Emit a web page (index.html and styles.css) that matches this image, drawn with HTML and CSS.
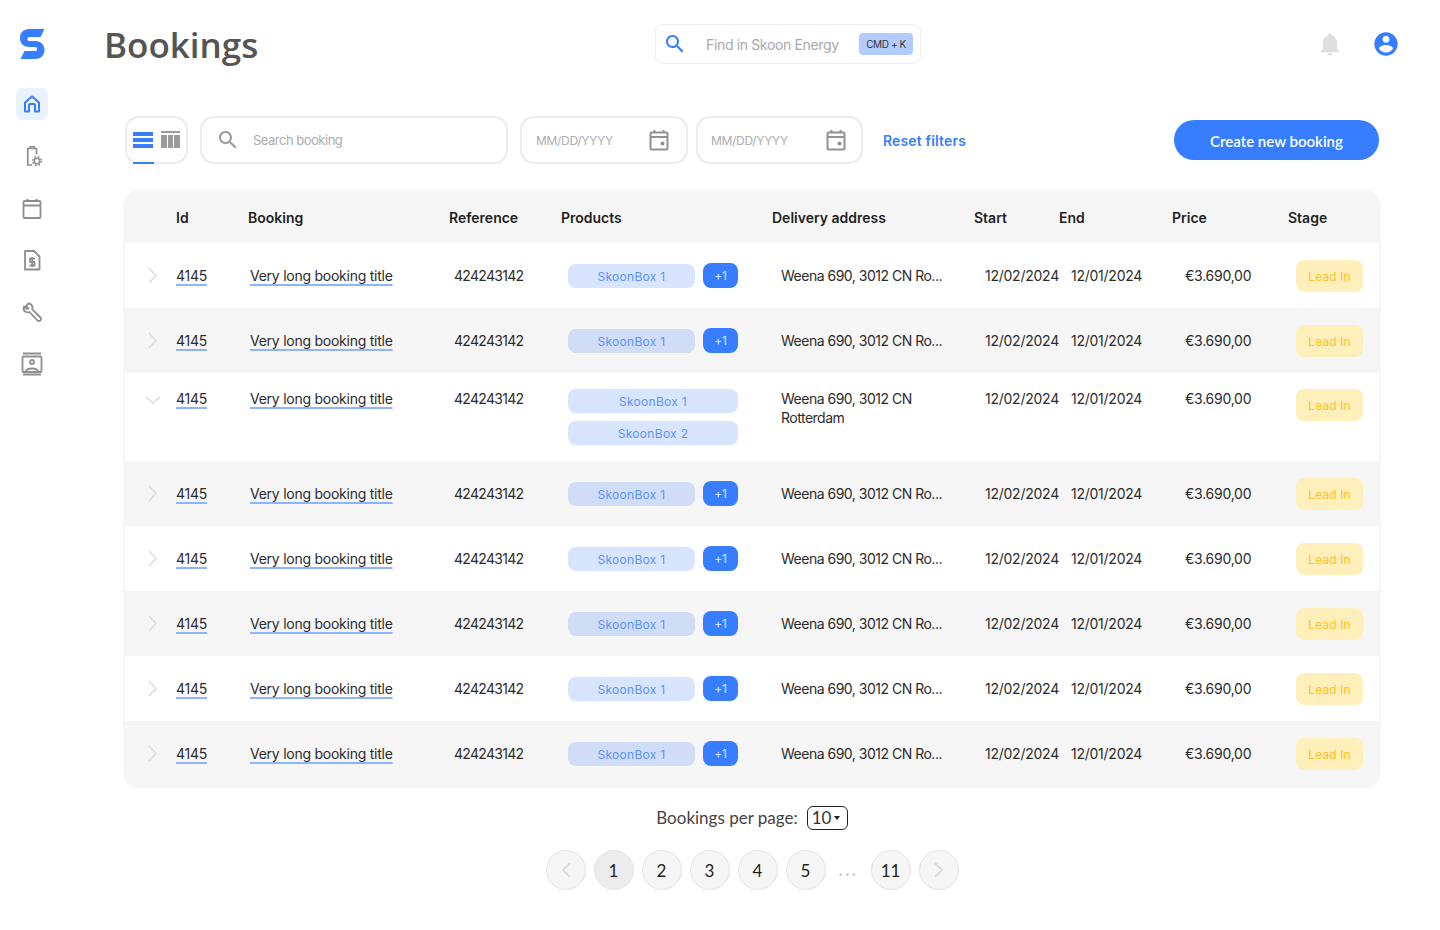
FILE: index.html
```html
<!DOCTYPE html>
<html lang="en">
<head>
<meta charset="utf-8">
<title>Bookings</title>
<link rel="stylesheet" href="styles.css">
</head>
<body>
<div class="app">
  <aside class="sidebar">
    <svg class="logo" width="25" height="30" viewBox="0 0 25 30"><path fill="#377dff" d="M24.500 0H9C3.500 0 0 3.500 0 9C0 14.500 3.500 18 9 18H15.500C16.500 18 17 18.700 17 20C17 21.300 16.500 22 15.500 22H4.500L.5 30H15.500C21 30 24.500 26 24.500 21C24.500 16 21 12 15.500 12H9C8 12 7.500 11.200 7.500 10C7.500 8.800 8 8 9 8H20.500Z"/></svg>
    <nav class="nav">
      <a class="nav-item active"><svg width="24" height="24" viewBox="0 0 24 24" fill="none" stroke="#377dff" stroke-width="2" stroke-linejoin="round"><path d="M5 10.500L12 4.500L19 10.500V19.500H15V13.500A1.500 1.500 0 0 0 13.500 12H10.500A1.500 1.500 0 0 0 9 13.500V19.500H5Z"/></svg></a>
      <a class="nav-item"><svg width="24" height="24" viewBox="0 0 24 24" fill="none" stroke="#8f8f8f" stroke-width="1.700"><path d="M16.500 10.500V4.500H7.800V21H12"/><path d="M10 4.500V2.700H14.300V4.500" stroke-width="1.500"/><circle cx="17" cy="17" r="2.700" stroke-width="1.500"/><circle cx="17" cy="17" r="4.300" stroke-width="1.500" stroke-dasharray="1.800 1.600"/></svg></a>
      <a class="nav-item"><svg width="24" height="24" viewBox="0 0 24 24" fill="none" stroke="#8f8f8f" stroke-width="1.800"><rect x="3.500" y="5" width="17" height="17" rx="1"/><path d="M3.500 9.500H20.500M7.500 3V5M16.500 3V5"/></svg></a>
      <a class="nav-item"><svg width="24" height="24" viewBox="0 0 24 24" fill="none" stroke="#8f8f8f" stroke-width="1.800" stroke-linejoin="round"><path d="M5 3H14L19.500 8.500V21.500H5Z"/><path d="M15 10.500H10V14H14.500V17.500H9.500M12.200 9V19"/></svg></a>
      <a class="nav-item"><svg width="24" height="24" viewBox="0 0 24 24" fill="none" stroke="#8f8f8f" stroke-width="1.800" stroke-linejoin="round"><path d="M8.500 3.500L6 6L8.500 8.500L6 8.500L4 6.500C3 9 4 11 6 12C7.500 12.500 8.500 12.300 9.500 12L17 20C18 21.300 19.500 21.300 20.500 20.300C21.300 19.300 21.300 18 20 17L12.300 9.300C12.800 7.500 12.300 5.500 10.800 4.300C10 3.700 9.300 3.500 8.500 3.500Z"/></svg></a>
      <a class="nav-item"><svg width="24" height="24" viewBox="0 0 24 24" fill="none" stroke="#8f8f8f" stroke-width="1.800"><path d="M3 1.500H21M3 22.500H21"/><rect x="2.500" y="4.500" width="19" height="15.500" rx="1"/><circle cx="12" cy="10" r="2"/><path d="M6 19.500C7 15.500 17 15.500 18 19.500"/></svg></a>
    </nav>
  </aside>
  <main class="main">
    <header class="topbar">
      <h1 class="title">Bookings</h1>
      <div class="find">
        <svg width="24" height="24" viewBox="0 0 24 24"><path fill="#377dff" d="M15.500 14h-.79l-.28-.27C15.410 12.590 16 11.110 16 9.500 16 5.910 13.090 3 9.500 3S3 5.910 3 9.500 5.910 16 9.500 16c1.610 0 3.090-.59 4.230-1.570l.27.28v.79l5 4.990L20.490 19l-4.990-5zm-6 0C7.010 14 5 11.990 5 9.500S7.010 5 9.500 5 14 7.010 14 9.500 11.990 14 9.500 14z"/></svg>
        <span class="find-text">Find in Skoon Energy</span>
        <span class="kbd">CMD + K</span>
      </div>
      <div class="top-icons">
        <svg width="28" height="28" viewBox="0 0 24 24"><path fill="#dedede" d="M12 22c1.100 0 2-.9 2-2h-4c0 1.100.89 2 2 2zm6-6v-5c0-3.070-1.640-5.640-4.500-6.320V4c0-.83-.67-1.500-1.500-1.500s-1.500.67-1.500 1.500v.68C7.630 5.360 6 7.920 6 11v5l-2 2v1h16v-1l-2-2z"/></svg>
        <svg width="28" height="28" viewBox="0 0 24 24"><path fill="#377dff" d="M12 2C6.480 2 2 6.480 2 12s4.480 10 10 10 10-4.480 10-10S17.520 2 12 2zm0 3c1.660 0 3 1.340 3 3s-1.340 3-3 3-3-1.340-3-3 1.340-3 3-3zm0 14.200c-2.500 0-4.710-1.280-6-3.220.03-1.990 4-3.080 6-3.080 1.990 0 5.970 1.090 6 3.080-1.290 1.940-3.500 3.220-6 3.220z"/></svg>
      </div>
    </header>

    <section class="toolbar">
      <div class="toggle">
        <span class="view-list"><i></i><i></i><i></i></span>
        <span class="view-table"><b></b><span><i></i><i></i><i></i></span></span>
      </div>
      <div class="field search">
        <svg width="24" height="24" viewBox="0 0 24 24"><path fill="#9a9a9a" d="M15.500 14h-.79l-.28-.27C15.410 12.590 16 11.110 16 9.500 16 5.910 13.090 3 9.500 3S3 5.910 3 9.500 5.910 16 9.500 16c1.610 0 3.090-.59 4.230-1.570l.27.28v.79l5 4.990L20.490 19l-4.990-5zm-6 0C7.010 14 5 11.990 5 9.500S7.010 5 9.500 5 14 7.010 14 9.500 11.990 14 9.500 14z"/></svg>
        <span>Search booking</span>
      </div>
      <div class="field date">
        <span>MM/DD/YYYY</span>
        <svg width="24" height="24" viewBox="0 0 24 24" fill="none" stroke="#929292" stroke-width="2"><rect x="3.500" y="4.500" width="17" height="17" rx="1"/><path d="M3.500 9H20.500M7.500 2V5M16.500 2V5"/><circle cx="15.500" cy="15.500" r="2" fill="#929292" stroke="none"/></svg>
      </div>
      <div class="field date date-two">
        <span>MM/DD/YYYY</span>
        <svg width="24" height="24" viewBox="0 0 24 24" fill="none" stroke="#929292" stroke-width="2"><rect x="3.500" y="4.500" width="17" height="17" rx="1"/><path d="M3.500 9H20.500M7.500 2V5M16.500 2V5"/><circle cx="15.500" cy="15.500" r="2" fill="#929292" stroke="none"/></svg>
      </div>
      <a class="reset">Reset filters</a>
      <button class="create">Create new booking</button>
    </section>

    <section class="table">
      <div class="row head">
        <span></span><span>Id</span><span>Booking</span><span>Reference</span><span>Products</span><span>Delivery address</span><span>Start</span><span>End</span><span>Price</span><span>Stage</span>
      </div>

      <div class="row body">
        <span class="c-chev"><svg width="9" height="17" viewBox="0 0 9 17"><path d="M1 1L8 8.500L1 16" fill="none" stroke="#dcdcdc" stroke-width="1.600"/></svg></span>
        <span class="c-id"><a>4145</a></span><span class="c-name"><a>Very long booking title</a></span><span class="c-ref">424243142</span>
        <span class="c-prod"><span class="chip">SkoonBox 1</span><span class="more">+1</span></span>
        <span class="c-addr">Weena 690, 3012 CN Ro...</span><span class="c-start">12/02/2024</span><span class="c-end">12/01/2024</span><span class="c-price">€3.690,00</span><span class="c-stage"><span class="stage">Lead In</span></span>
      </div>
      <div class="row body">
        <span class="c-chev"><svg width="9" height="17" viewBox="0 0 9 17"><path d="M1 1L8 8.500L1 16" fill="none" stroke="#dcdcdc" stroke-width="1.600"/></svg></span>
        <span class="c-id"><a>4145</a></span><span class="c-name"><a>Very long booking title</a></span><span class="c-ref">424243142</span>
        <span class="c-prod"><span class="chip">SkoonBox 1</span><span class="more">+1</span></span>
        <span class="c-addr">Weena 690, 3012 CN Ro...</span><span class="c-start">12/02/2024</span><span class="c-end">12/01/2024</span><span class="c-price">€3.690,00</span><span class="c-stage"><span class="stage">Lead In</span></span>
      </div>
      <div class="row body open">
        <span class="c-chev"><svg width="16" height="8" viewBox="0 0 16 8"><path d="M1 1L8 7L15 1" fill="none" stroke="#dcdcdc" stroke-width="1.600"/></svg></span>
        <span class="c-id"><a>4145</a></span><span class="c-name"><a>Very long booking title</a></span><span class="c-ref">424243142</span>
        <span class="c-prod stack"><span class="chip">SkoonBox 1</span><span class="chip">SkoonBox 2</span></span>
        <span class="c-addr wrap">Weena 690, 3012 CN Rotterdam</span><span class="c-start">12/02/2024</span><span class="c-end">12/01/2024</span><span class="c-price">€3.690,00</span><span class="c-stage"><span class="stage">Lead In</span></span>
      </div>
      <div class="row body">
        <span class="c-chev"><svg width="9" height="17" viewBox="0 0 9 17"><path d="M1 1L8 8.500L1 16" fill="none" stroke="#dcdcdc" stroke-width="1.600"/></svg></span>
        <span class="c-id"><a>4145</a></span><span class="c-name"><a>Very long booking title</a></span><span class="c-ref">424243142</span>
        <span class="c-prod"><span class="chip">SkoonBox 1</span><span class="more">+1</span></span>
        <span class="c-addr">Weena 690, 3012 CN Ro...</span><span class="c-start">12/02/2024</span><span class="c-end">12/01/2024</span><span class="c-price">€3.690,00</span><span class="c-stage"><span class="stage">Lead In</span></span>
      </div>
      <div class="row body">
        <span class="c-chev"><svg width="9" height="17" viewBox="0 0 9 17"><path d="M1 1L8 8.500L1 16" fill="none" stroke="#dcdcdc" stroke-width="1.600"/></svg></span>
        <span class="c-id"><a>4145</a></span><span class="c-name"><a>Very long booking title</a></span><span class="c-ref">424243142</span>
        <span class="c-prod"><span class="chip">SkoonBox 1</span><span class="more">+1</span></span>
        <span class="c-addr">Weena 690, 3012 CN Ro...</span><span class="c-start">12/02/2024</span><span class="c-end">12/01/2024</span><span class="c-price">€3.690,00</span><span class="c-stage"><span class="stage">Lead In</span></span>
      </div>
      <div class="row body">
        <span class="c-chev"><svg width="9" height="17" viewBox="0 0 9 17"><path d="M1 1L8 8.500L1 16" fill="none" stroke="#dcdcdc" stroke-width="1.600"/></svg></span>
        <span class="c-id"><a>4145</a></span><span class="c-name"><a>Very long booking title</a></span><span class="c-ref">424243142</span>
        <span class="c-prod"><span class="chip">SkoonBox 1</span><span class="more">+1</span></span>
        <span class="c-addr">Weena 690, 3012 CN Ro...</span><span class="c-start">12/02/2024</span><span class="c-end">12/01/2024</span><span class="c-price">€3.690,00</span><span class="c-stage"><span class="stage">Lead In</span></span>
      </div>
      <div class="row body">
        <span class="c-chev"><svg width="9" height="17" viewBox="0 0 9 17"><path d="M1 1L8 8.500L1 16" fill="none" stroke="#dcdcdc" stroke-width="1.600"/></svg></span>
        <span class="c-id"><a>4145</a></span><span class="c-name"><a>Very long booking title</a></span><span class="c-ref">424243142</span>
        <span class="c-prod"><span class="chip">SkoonBox 1</span><span class="more">+1</span></span>
        <span class="c-addr">Weena 690, 3012 CN Ro...</span><span class="c-start">12/02/2024</span><span class="c-end">12/01/2024</span><span class="c-price">€3.690,00</span><span class="c-stage"><span class="stage">Lead In</span></span>
      </div>
      <div class="row body">
        <span class="c-chev"><svg width="9" height="17" viewBox="0 0 9 17"><path d="M1 1L8 8.500L1 16" fill="none" stroke="#dcdcdc" stroke-width="1.600"/></svg></span>
        <span class="c-id"><a>4145</a></span><span class="c-name"><a>Very long booking title</a></span><span class="c-ref">424243142</span>
        <span class="c-prod"><span class="chip">SkoonBox 1</span><span class="more">+1</span></span>
        <span class="c-addr">Weena 690, 3012 CN Ro...</span><span class="c-start">12/02/2024</span><span class="c-end">12/01/2024</span><span class="c-price">€3.690,00</span><span class="c-stage"><span class="stage">Lead In</span></span>
      </div>
    </section>

    <section class="per-page">
      <span>Bookings per page:</span>
      <span class="select">10<i class="caret"></i></span>
    </section>
    <nav class="pager">
      <span class="page dim"><svg width="12" height="18" viewBox="0 0 12 18"><path d="M10 2L3 9L10 16" fill="none" stroke="#dcdcdc" stroke-width="2"/></svg></span>
      <span class="page current">1</span>
      <span class="page">2</span>
      <span class="page">3</span>
      <span class="page">4</span>
      <span class="page">5</span>
      <span class="dots">...</span>
      <span class="page">11</span>
      <span class="page dim"><svg width="12" height="18" viewBox="0 0 12 18"><path d="M2 2L9 9L2 16" fill="none" stroke="#dcdcdc" stroke-width="2"/></svg></span>
    </nav>
  </main>
</div>
</body>
</html>
```

FILE: styles.css
```css
* { box-sizing: border-box; }
html, body { margin: 0; background: #fff; }
body { font-family: "Inter", "Liberation Sans", sans-serif; color: #2b2b2b; }
svg { display: block; flex: none; }

.app { display: flex; min-height: 930px; }

.sidebar { width: 64px; flex: none; padding: 29px 0 0 20px; }
.logo { margin-bottom: 29px; }
.nav { display: flex; flex-direction: column; gap: 20px; margin-left: -4px; }
.nav-item { width: 32px; height: 32px; display: flex; align-items: center; justify-content: center; border-radius: 6px; }
.nav-item.active { background: #ebf2ff; }

.main { flex: 1; min-width: 0; }

.topbar { display: flex; align-items: center; height: 88px; padding: 0 40px; }
.title { width: 551px; margin: 0; font: 600 35px/1 "Open Sans", sans-serif; color: #555; letter-spacing: 0; }
.find { width: 266px; height: 40px; border: 1.500px solid #eee; border-radius: 8px; display: flex; align-items: center; padding: 0 7px 0 7px; }
.find-text { margin-left: 19px; font-size: 14px; color: #a9a9a9; letter-spacing: -.35px; white-space: nowrap; }
.kbd { margin-left: auto; width: 54px; height: 22px; background: #b3ccff; border-radius: 4px; font-size: 10px; line-height: 22px; text-align: center; color: #333; white-space: nowrap; letter-spacing: -.4px; }
.top-icons { margin-left: auto; display: flex; gap: 28px; }

.toolbar { display: flex; align-items: flex-start; height: 74px; margin-top: 28px; padding-left: 61px; }
.toggle { width: 63px; height: 48px; border: 2px solid #ececec; border-radius: 14px; display: flex; gap: 8px; padding: 14px 0 0 6px; position: relative; }
.toggle::after { content: ""; position: absolute; left: 6px; bottom: -2px; width: 21px; height: 2px; background: #377dff; }
.view-list { display: flex; flex-direction: column; gap: 2px; width: 20px; }
.view-list i { display: block; height: 4px; background: #377dff; }
.view-table { display: flex; flex-direction: column; gap: 2px; width: 19px; margin-top: -1px; }
.view-table b { display: block; height: 2px; background: #9a9a9a; }
.view-table span { display: flex; gap: 1px; }
.view-table i { flex: 1; height: 13px; background: #9a9a9a; }

.field { height: 48px; border: 2px solid #ececec; border-radius: 14px; display: flex; align-items: center; font-size: 13px; color: #adadad; white-space: nowrap; }
.search { width: 308px; margin-left: 12px; padding-left: 14px; }
.search span { margin-left: 13px; letter-spacing: -.5px; }
.date { width: 168px; margin-left: 12px; padding: 0 15px 0 14px; justify-content: space-between; font-size: 12px; letter-spacing: -.3px; }
.date-two { margin-left: 8px; width: 167px; padding: 0 13px 0 13px; }
.reset { margin: 0 0 0 20px; font-size: 14px; font-weight: 600; line-height: 50px; color: #377dff; letter-spacing: .15px; white-space: nowrap; }
.create { margin: 4px 0 0 208px; width: 205px; height: 40px; border: 0; border-radius: 20px; background: #377dff; color: #fff; font: 600 15px/40px "Lato", sans-serif; }

.table { width: 1258px; margin-left: 59px; border: 2px solid #f6f6f6; border-radius: 16px; overflow: hidden; }
.row { display: grid; grid-template-columns: 51px 72px 201px 112px 211px 202px 85px 113px 116px 1fr; font-size: 14px; }
.head { height: 51px; background: #f6f6f6; align-items: center; font-weight: 600; color: #1f1f1f; }
.body { height: 65px; align-items: center; letter-spacing: -.25px; line-height: 20px; }
.body:nth-child(odd) { background: #f6f6f6; }
.body.open { height: 88px; align-items: start; padding-top: 16px; }

.c-chev { padding-left: 23px; }
.open .c-chev { padding: 7px 0 0 20px; }
.c-id a, .c-name a { text-decoration: underline; text-decoration-color: #8fb4ff; text-decoration-thickness: 2px; text-underline-offset: 3px; text-decoration-skip-ink: none; }
.c-name { padding-left: 2px; }
.c-ref { padding-left: 5px; letter-spacing: -.7px; }
.c-prod { padding-left: 7px; display: flex; gap: 8px; align-items: center; width: 177px; }
.c-prod.stack { flex-direction: column; align-items: stretch; }
.chip { flex: 1; height: 24px; padding-top: 1px; border-radius: 8px; background: rgba(55,125,255,.2); color: #5c93ff; font-size: 12px; line-height: 24px; text-align: center; letter-spacing: .3px; }
.stack .chip { flex: none; }
.more { width: 35px; height: 25px; border-radius: 8px; background: #377dff; color: #d9e6ff; font-size: 12px; line-height: 25px; text-align: center; }
.c-addr { margin-left: 9px; width: 163px; white-space: nowrap; letter-spacing: -.5px; }
.c-addr.wrap { white-space: normal; line-height: 19px; width: 150px; }
.c-start { padding-left: 11px; }
.c-end { padding-left: 12px; }
.c-price { padding-left: 13px; }
.c-stage { padding-left: 8px; }
.stage { display: block; width: 67px; height: 32px; padding-top: 1px; border-radius: 8px; background: #feefbb; color: #fdc21e; font-size: 12px; line-height: 32px; text-align: center; letter-spacing: .1px; }

.per-page { display: flex; align-items: center; justify-content: center; gap: 9px; height: 24px; margin-top: 18px; font: 400 17px/24px "Lato", sans-serif; color: #444; }
.select { width: 41px; height: 24px; border: 1px solid #222; border-radius: 6px; display: flex; align-items: center; padding-left: 4px; gap: 3px; color: #333; }
.caret { width: 0; height: 0; border: 3.500px solid transparent; border-top: 4px solid #222; border-bottom: 0; }

.pager { display: flex; justify-content: center; gap: 8px; margin-top: 20px; }
.page { width: 40px; height: 40px; border: 1px solid #e3e3e3; border-radius: 50%; background: #f6f6f6; display: flex; align-items: center; justify-content: center; font: 400 17px/1 "Lato", sans-serif; color: #222; }
.page.current { background: #ececec; }
.dots { width: 29px; text-align: center; line-height: 40px; color: #c8c8c8; letter-spacing: 1.500px; font-size: 16px; font-weight: 600; }
```
